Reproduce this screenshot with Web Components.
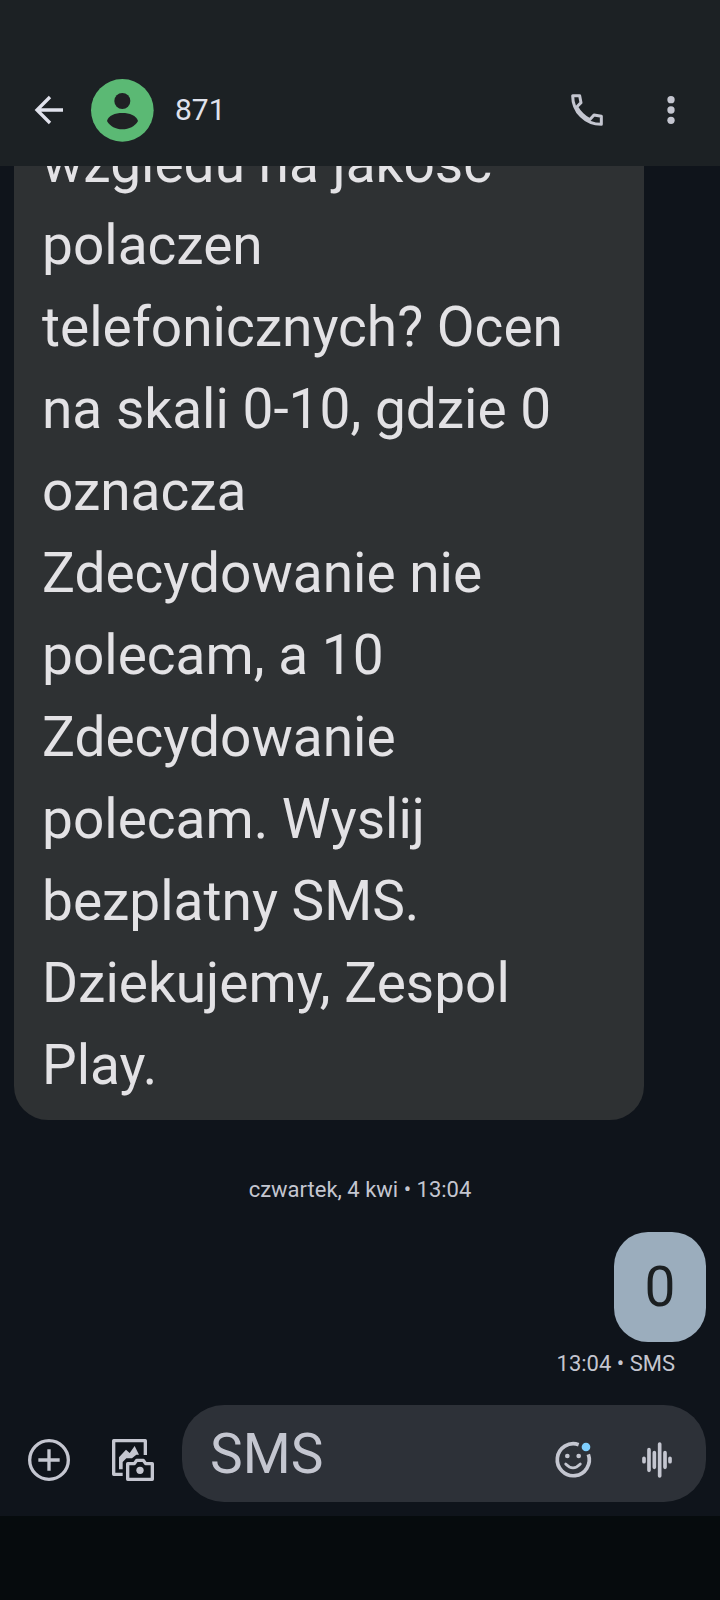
<!DOCTYPE html>
<html lang="pl">
<head>
<meta charset="utf-8">
<meta name="viewport" content="width=device-width, initial-scale=1">
<title>871</title>
<style>
  html, body { margin: 0; height: 100%; }
  body { background: #0f141b; font-family: Roboto, "Noto Sans", sans-serif; color: #e3e2e5; }
</style>
</head>
<body>
<chat-screen>
  <chat-header slot="header" name="871"></chat-header>
  <chat-bubble kind="in">wzgledu na jakosc polaczen telefonicznych? Ocen na skali 0-10, gdzie 0 oznacza Zdecydowanie nie polecam, a 10 Zdecydowanie polecam. Wyslij bezplatny SMS. Dziekujemy, Zespol Play.</chat-bubble>
  <chat-date>czwartek, 4 kwi • 13:04</chat-date>
  <chat-bubble kind="out">0<span slot="status">13:04 • SMS</span></chat-bubble>
  <chat-compose slot="compose"></chat-compose>
</chat-screen>

<script>
const icons = {
  back: '<path d="M105 63H26M66 24L27 63L66 102" fill="none" stroke="#e0e2ec" stroke-width="10"/>',
  call: '<path d="M20 20H41L45 41L32 54C41 70 54 83 71 92L84 78L106 82V106C58 106 20 68 20 20Z" fill="none" stroke="#c4c6d0" stroke-width="9" stroke-linejoin="round"/>',
  more: '<g fill="#c4c6d0"><circle cx="63" cy="32" r="11"/><circle cx="63" cy="63" r="11"/><circle cx="63" cy="94" r="11"/></g>',
  add: '<g fill="none" stroke="#c4c6d0" stroke-width="10"><circle cx="63" cy="63" r="58"/><path d="M31 63H95M63 31V95"/></g>',
  gallery: '<g fill="none" stroke="#c4c6d0" stroke-width="10" stroke-linejoin="round"><path d="M32 106H5V5H100V48"/><path d="M47 74H67L74 64H94L101 74H121V121H47Z"/></g><path fill="#c4c6d0" d="M21 91V55L42 32L53 42L68 21L81 47H73L60 58H43L32 69V91Z"/><circle cx="84" cy="94" r="11" fill="#c4c6d0"/>',
  emoji: '<path d="M80 17A48 48 0 1 0 109 46" fill="none" stroke="#c4c6d0" stroke-width="11"/><path d="M41 75Q63 98 85 75" fill="none" stroke="#c4c6d0" stroke-width="8" stroke-linecap="round"/><g fill="#c4c6d0"><circle cx="46" cy="51" r="7"/><circle cx="80" cy="51" r="7"/></g><circle cx="102" cy="24" r="13" fill="#7fcfff"/>',
  voice: '<path d="M24 58V68M39 32V94M55 41V85M71 15V111M87 41V85M102 58V68" fill="none" stroke="#c4c6d0" stroke-width="11" stroke-linecap="round"/>'
};

const define = (tag, css, html) => customElements.define(tag, class extends HTMLElement {
  constructor() {
    super();
    this.attachShadow({ mode: 'open' }).innerHTML =
      `<style>*{box-sizing:border-box}${css}</style>${html(this)}`;
  }
});

define('icon-button', `
  :host { display: block; flex: none; }
  button { display: flex; align-items: center; justify-content: center; width: 84px; height: 84px; padding: 0; border: 0; background: none; }
  svg { width: 42px; height: 42px; display: block; }`,
  el => `<button type="button" aria-label="${el.getAttribute('label')}"><svg viewBox="0 0 126 126" aria-hidden="true">${icons[el.getAttribute('icon')]}</svg></button>`);

define('contact-avatar', `
  :host { display: block; flex: none; }
  svg { width: 63px; height: 63px; display: block; }`,
  () => `<svg viewBox="0 0 189 189" aria-hidden="true"><circle cx="94" cy="94" r="94" fill="#5bb974"/><g fill="#202124"><circle cx="94" cy="66" r="24"/><path d="M48 126C52 110 72 102 94 102S136 110 141 126C132 142 114 151 94 151S57 142 48 126Z"/></g></svg>`);

define('chat-header', `
  :host { display: block; background: #1c2124; }
  header { display: flex; align-items: center; padding: 68px 7px 14px; }
  h1 { flex: 1; margin: 0 0 0 21px; font-size: 30px; line-height: 42px; font-weight: 400; color: #e0e2ec; }`,
  el => `<header><icon-button icon="back" label="Wstecz"></icon-button><contact-avatar></contact-avatar><h1>${el.getAttribute('name')}</h1><icon-button icon="call" label="Zadzwoń"></icon-button><icon-button icon="more" label="Więcej opcji"></icon-button></header>`);

define('chat-bubble', `
  :host { display: flex; flex-direction: column; flex: none; align-items: flex-start; }
  :host([kind="out"]) { align-items: flex-end; }
  .text { margin: 0; padding: 14px 56px 14px 28px; border-radius: 34px; background: #2e3133; font-size: 55px; line-height: 82px; max-width: 91%; }
  :host([kind="out"]) .text { min-width: 92px; padding: 14px 28px; text-align: center; background: #9badbd; color: #1b1f21; }
  .status { padding: 6px 31px 12px; font-size: 22px; line-height: 31px; color: #c4c6d0; }
  :host([kind="in"]) .status { display: none; }`,
  () => `<p class="text"><slot></slot></p><div class="status"><slot name="status"></slot></div>`);

define('chat-date', `
  :host { display: block; flex: none; padding: 54px 0 27px; text-align: center; font-size: 22px; line-height: 31px; color: #c4c6d0; }`,
  () => `<slot></slot>`);

define('chat-compose', `
  :host { display: block; }
  form { display: flex; align-items: flex-end; padding: 14px 14px 14px 7px; }
  .field { flex: 1; min-width: 0; display: flex; align-items: flex-end; margin-left: 7px; padding-right: 7px; border-radius: 42px; background: #2d3138; }
  input { flex: 1; min-width: 0; height: 97px; padding: 0 0 0 28px; border: 0; outline: 0; background: none; font: inherit; font-size: 55px; color: #e3e2e5; }
  input::placeholder { color: #c4c6d0; opacity: 1; }`,
  () => `<form><icon-button icon="add" label="Dodaj"></icon-button><icon-button icon="gallery" label="Galeria i aparat"></icon-button><div class="field"><input type="text" placeholder="SMS" aria-label="Wiadomość SMS"><icon-button icon="emoji" label="Emotikony"></icon-button><icon-button icon="voice" label="Wiadomość głosowa"></icon-button></div></form>`);

define('chat-screen', `
  :host { display: flex; flex-direction: column; height: 100vh; }
  main { flex: 1; min-height: 0; display: flex; flex-direction: column; justify-content: flex-end; overflow: hidden; padding: 0 14px; }
  footer { height: 84px; flex: none; background: #060b0d; }`,
  () => `<slot name="header"></slot><main><slot></slot></main><slot name="compose"></slot><footer></footer>`);
</script>
</body>
</html>
